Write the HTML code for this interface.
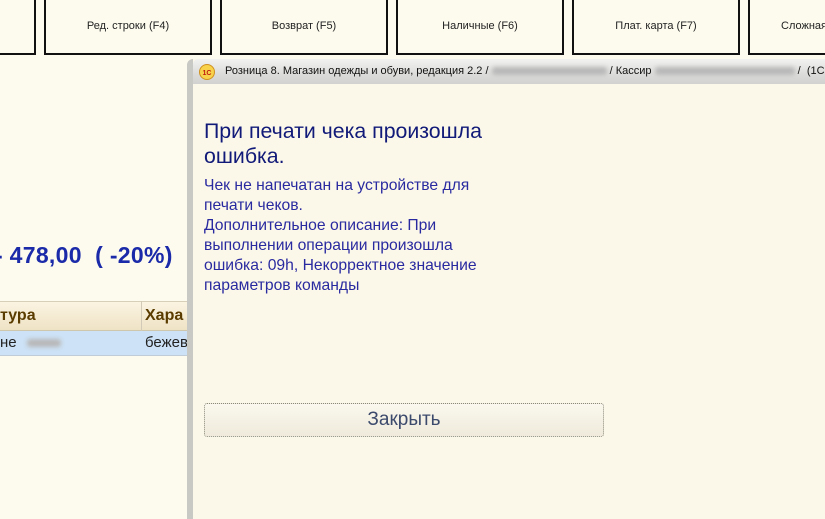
<!DOCTYPE html>
<html><head><meta charset="utf-8"><style>
body{margin:0;width:825px;height:510px;overflow:hidden;background:#fdfbee;font-family:"Liberation Sans",Arial,sans-serif;position:relative}
.btn{position:absolute;top:-2px;height:57px;border:2px solid #111;border-top:none;background:#fdfbee;font-size:11px;color:#222;display:flex;align-items:center;justify-content:center;box-sizing:border-box}
.dlg{position:absolute;left:187px;top:59px;width:650px;height:460px;background:#fbf8e9;border-left:6px solid #c8c8c4;border-top-left-radius:6px;box-sizing:border-box}
.tb{position:absolute;left:0;top:0;right:0;height:25px;background:linear-gradient(#f2f2f0,#dcdcda 60%,#d2d2d0);border-top-left-radius:5px;font-size:11px;color:#111;line-height:25px;white-space:nowrap}
.blur{display:inline-block;height:8px;background:#b8b8b8;filter:blur(2px);vertical-align:middle;border-radius:3px}
</style></head><body>
<div class="btn" style="left:-20px;width:56px"></div>
<div class="btn" style="left:44px;width:168px">Ред. строки (F4)</div>
<div class="btn" style="left:220px;width:168px">Возврат (F5)</div>
<div class="btn" style="left:396px;width:168px">Наличные (F6)</div>
<div class="btn" style="left:572px;width:168px">Плат. карта (F7)</div>
<div class="btn" style="left:748px;width:120px;justify-content:flex-start;padding-left:31px">Сложная</div>

<div style="position:absolute;left:-5px;top:242px;font-size:23px;font-weight:bold;color:#1a2aa8;white-space:nowrap;letter-spacing:0.3px">- 478,00&nbsp; ( -20%)</div>
<div style="position:absolute;left:0;top:301px;width:187px;height:28px;background:linear-gradient(#fbf4e2,#efe3c6);border-top:1px solid #d8cfb8;border-bottom:1px solid #cfc6ae"></div>
<div style="position:absolute;left:141px;top:301px;width:1px;height:54px;background:#d2cab6"></div>
<div style="position:absolute;left:0;top:307px;font-size:16px;font-weight:bold;color:#5a3c00">тура</div>
<div style="position:absolute;left:145px;top:307px;font-size:16px;font-weight:bold;color:#5a3c00">Хара</div>
<div style="position:absolute;left:0;top:331px;width:187px;height:24px;background:#cde2f6;border-bottom:1px solid #c0ccd8"></div>
<div style="position:absolute;left:0;top:334px;font-size:15px;color:#222">не <span class="blur" style="width:34px;margin-left:6px"></span></div>
<div style="position:absolute;left:145px;top:334px;font-size:15px;color:#222">бежев</div>

<div class="dlg">
<div class="tb"><svg width="18" height="18" viewBox="0 0 18 18" style="position:absolute;left:5px;top:4px"><circle cx="9" cy="9" r="7.5" fill="#f7d24a" stroke="#d09020"/><text x="9" y="12" font-size="7" font-weight="bold" text-anchor="middle" fill="#c02010" font-family="Liberation Sans">1C</text></svg><span style="position:absolute;left:32px">Розница 8. Магазин одежды и обуви, редакция 2.2 / <span class="blur" style="width:115px"></span> / Кассир <span class="blur" style="width:140px"></span> /&nbsp; (1С</span></div>
<div style="position:absolute;left:11px;top:60px;font-size:21.3px;line-height:25px;color:#111a78;white-space:nowrap">При печати чека произошла<br>ошибка.</div>
<div style="position:absolute;left:11px;top:117px;font-size:15.7px;line-height:20px;color:#2a2aa0;white-space:nowrap">Чек не напечатан на устройстве для<br>печати чеков.<br>Дополнительное описание: При<br>выполнении операции произошла<br>ошибка: 09h, Некорректное значение<br>параметров команды</div>
<div style="position:absolute;left:11px;top:344px;width:400px;height:34px;box-sizing:border-box;border:1px dotted #8a8a7a;border-radius:3px;background:linear-gradient(#faf8ee,#efeadb);font-size:19px;color:#3c4a6c;text-align:center;line-height:32px">Закрыть</div>
</div>
</body></html>
